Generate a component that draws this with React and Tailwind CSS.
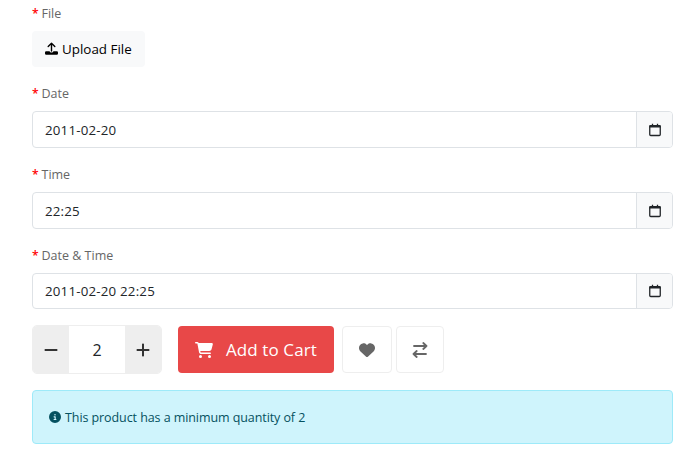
import { FaMinus, FaPlus, FaCartShopping, FaHeart, FaCircleInfo } from "react-icons/fa6";

function CalendarIcon() {
  return (
    <svg width="12" height="14" viewBox="0 0 12 14" fill="none" stroke="currentColor">
      <path d="M3.5 0.8v2M8.5 0.8v2" strokeWidth="1.3" />
      <rect x="0.75" y="2.6" width="10.5" height="9.9" rx="1" strokeWidth="1.3" />
      <path d="M0.4 3.4h11.2" strokeWidth="2.2" />
    </svg>
  );
}

function UploadIcon() {
  return (
    <svg width="13" height="14" viewBox="0 0 13 14" fill="none" stroke="currentColor">
      <path d="M6.5 9V1.4M3.2 4.4L6.5 1.2l3.3 3.2" strokeWidth="1.4" strokeLinecap="round" strokeLinejoin="round" />
      <path
        d="M1.2 9.3H4.6a1.9 1.3 0 0 0 3.8 0h3.4A1.2 1.2 0 0 1 13 10.5v1.1a1.2 1.2 0 0 1-1.2 1.2H1.2A1.2 1.2 0 0 1 0 11.6v-1.1a1.2 1.2 0 0 1 1.2-1.2z"
        fill="currentColor"
        stroke="none"
      />
    </svg>
  );
}

function SwapIcon() {
  return (
    <svg width="16" height="16" viewBox="0 0 16 16" fill="none" stroke="currentColor" strokeWidth="1.8" strokeLinecap="round" strokeLinejoin="round">
      <path d="M2 4h12.5M11.3 1l3.2 3-3.2 3" />
      <path d="M14 12H1.5M4.7 9l-3.2 3 3.2 3" />
    </svg>
  );
}

function Label({ children }) {
  return (
    <div className="flex h-5 items-center text-[12.5px] leading-5 text-[#666666]">
      <span className="w-[9.5px] text-[12px] font-semibold text-[#ff0000]">*</span>
      <span>{children}</span>
    </div>
  );
}

function PickerField({ label, value, className, boxClassName = "h-[37px]" }) {
  return (
    <div className={className}>
      <Label>{label}</Label>
      <div className={`mt-[7px] flex overflow-hidden rounded border border-[#dee2e6] ${boxClassName}`}>
        <div className="flex flex-1 items-center pt-0.5 pl-3 text-[13.3px] tracking-[0.2px] text-[#212529]">{value}</div>
        <div className="flex w-9 items-center justify-center border-l border-[#dee2e6] bg-[#f8f9fa] text-[#212529]">
          <CalendarIcon />
        </div>
      </div>
    </div>
  );
}

export default function App() {
  return (
    <div className="h-[456px] w-[698px] overflow-hidden bg-white pt-1 pr-[25px] pl-8 font-['Open_Sans','Noto_Sans',sans-serif]">
      <Label>File</Label>
      <button className="mt-[7px] flex h-9 w-[113px] items-center rounded bg-[#f8f9fa] pl-[13px] text-[13.4px] whitespace-nowrap text-black">
        <UploadIcon />
        <span className="ml-1 pt-px">Upload File</span>
      </button>

      <PickerField label="Date" value="2011-02-20" className="mt-[17px]" />
      <PickerField label="Time" value="22:25" className="mt-[17px]" />
      <PickerField label="Date & Time" value="2011-02-20 22:25" className="mt-[17px]" boxClassName="h-9" />

      <div className="mt-4 flex h-[49px] items-center">
        <div className="flex h-[49px] w-[130px] overflow-hidden rounded-[5px] border border-[#eeeeee] text-[#333333]">
          <button className="flex w-9 items-center justify-center bg-[#eeeeee]">
            <FaMinus size={16} />
          </button>
          <div className="flex flex-1 items-center justify-center text-[16px] text-[#212529]">2</div>
          <button className="flex w-9 items-center justify-center bg-[#eeeeee]">
            <FaPlus size={16} />
          </button>
        </div>
        <button className="ml-4 flex h-[47px] w-[156px] items-center rounded bg-[#e84848] pl-[17px] text-[17px] whitespace-nowrap text-white">
          <FaCartShopping size={18} />
          <span className="ml-[13px] tracking-[0.1px]">Add to Cart</span>
        </button>
        <button className="ml-2 flex h-[47px] w-[50px] items-center justify-center rounded border border-[#eeeeee] text-[#666666]">
          <FaHeart size={16} />
        </button>
        <button className="ml-1 flex h-[47px] w-12 items-center justify-center rounded border border-[#eeeeee] text-[#666666]">
          <SwapIcon />
        </button>
      </div>

      <div className="mt-4 flex h-[54px] items-center rounded border border-[#9eeaf9] bg-[#cff4fc] pl-4 text-[12.5px] text-[#055160]">
        <FaCircleInfo size={12} />
        <span className="ml-1 pt-0.5 tracking-[-0.08px]">This product has a minimum quantity of 2</span>
      </div>
    </div>
  );
}
